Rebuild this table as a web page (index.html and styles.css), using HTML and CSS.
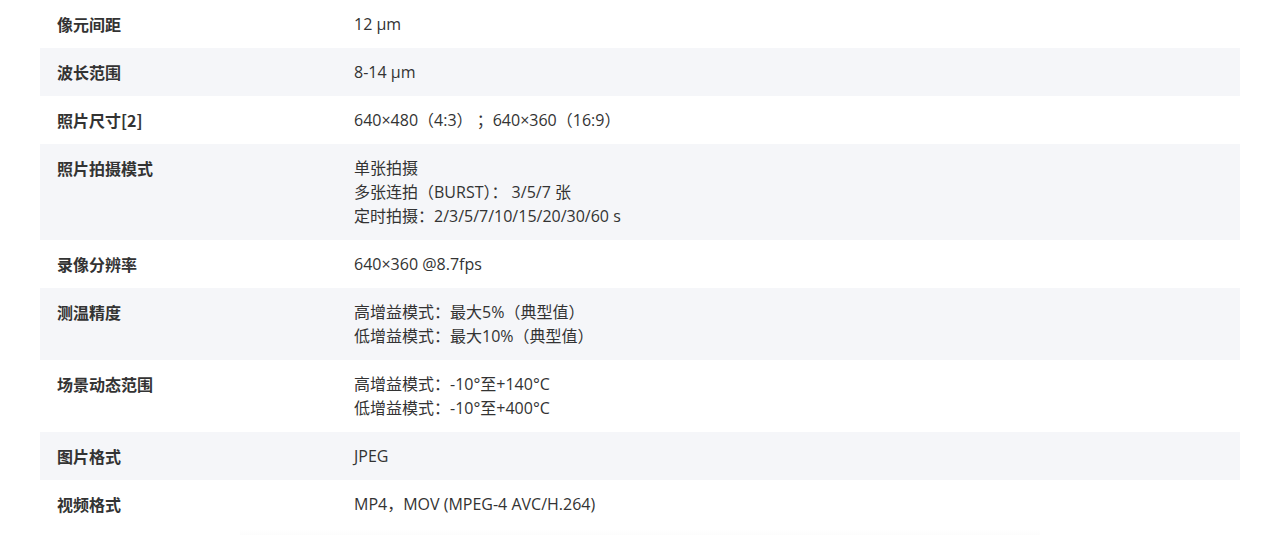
FILE: index.html
```html
<!DOCTYPE html>
<html lang="zh-CN">
<head>
<meta charset="utf-8">
<link rel="stylesheet" href="styles.css">
</head>
<body>
<div class="page">
  <table class="spec">
    <tbody>
      <tr><th>像元间距</th><td>12 μm</td></tr>
      <tr><th>波长范围</th><td>8-14 μm</td></tr>
      <tr><th>照片尺寸[2]</th><td>640×480（4:3） ；640×360（16:9）</td></tr>
      <tr><th>照片拍摄模式</th><td>单张拍摄<br>多张连拍（BURST）： 3/5/7 张<br>定时拍摄：2/3/5/7/10/15/20/30/60 s</td></tr>
      <tr><th>录像分辨率</th><td>640×360 @8.7fps</td></tr>
      <tr><th>测温精度</th><td>高增益模式：最大5%（典型值）<br>低增益模式：最大10%（典型值）</td></tr>
      <tr><th>场景动态范围</th><td>高增益模式：-10°至+140°C<br>低增益模式：-10°至+400°C</td></tr>
      <tr><th>图片格式</th><td>JPEG</td></tr>
      <tr><th>视频格式</th><td>MP4，MOV (MPEG-4 AVC/H.264)</td></tr>
    </tbody>
  </table>
  <div class="fade"></div>
</div>
</body>
</html>
```

FILE: styles.css
```css
html, body {
  margin: 0;
  padding: 0;
  background: #fff;
}
.page {
  padding: 0 40px;
  font-family: "Open Sans", "Noto Sans CJK SC", sans-serif;
  color: #333;
  font-size: 16px;
  line-height: 24px;
}
.spec {
  width: 100%;
  border-collapse: collapse;
}
.spec tr:nth-child(even) {
  background: #f5f6f9;
}
.spec th {
  width: 297px;
  text-align: left;
  vertical-align: top;
  font-weight: 700;
  font-family: "Noto Sans CJK SC", "Open Sans", sans-serif;
  padding: 12px 0 12px 17px;
}
.spec td {
  vertical-align: top;
  padding: 12px 0;
}
.fade {
  margin: 2px 200px 0;
  height: 5px;
  background: linear-gradient(#fff, #fcfcfc);
}
```
